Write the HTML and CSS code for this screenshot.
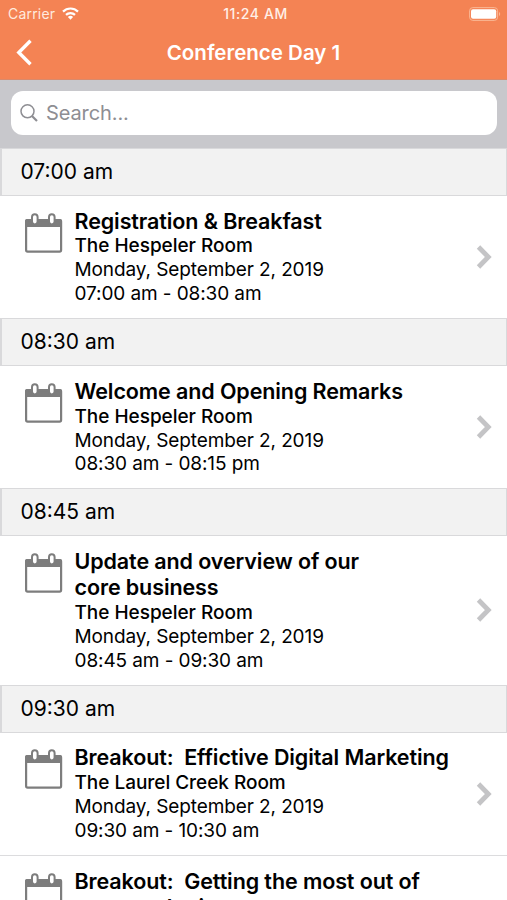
FILE: index.html
```html
<!DOCTYPE html>
<html lang="en">
<head>
<meta charset="utf-8">
<title>Conference Day 1</title>
<link rel="stylesheet" href="styles.css">
</head>
<body>
<svg class="defs" aria-hidden="true">
  <symbol id="calendar" viewBox="0 0 38 40">
    <path d="M2 6h33a2 2 0 0 1 2 2v6H0V8a2 2 0 0 1 2-2z" fill="#7d7d7d"/>
    <rect x="1.1" y="7.1" width="35" height="31.5" rx="1.5" fill="none" stroke="#7d7d7d" stroke-width="2.2"/>
    <rect x="7" y="1.2" width="5.6" height="10.2" rx="2.8" fill="#fff" stroke="#7d7d7d" stroke-width="2"/>
    <rect x="24" y="1.2" width="5.6" height="10.2" rx="2.8" fill="#fff" stroke="#7d7d7d" stroke-width="2"/>
  </symbol>
  <symbol id="chevron" viewBox="0 0 16 24">
    <path d="M2.5 2l9.8 10-9.8 10" fill="none" stroke="#c4c4c6" stroke-width="4.8"/>
  </symbol>
</svg>
<main class="screen">
  <header class="top">
    <div class="status">
      <div class="status-left"><span class="carrier">Carrier</span>
        <svg class="wifi" viewBox="0 0 17 13"><g fill="none" stroke="#fff" stroke-width="2.2"><path d="M1 4.6a10.6 10.6 0 0 1 15 0"/><path d="M4 7.9a6.4 6.4 0 0 1 9 0"/></g><path d="M5.9 10a3.7 3.7 0 0 1 5.2 0l-2.6 2.7z" fill="#fff"/></svg>
      </div>
      <span class="clock">11:24 AM</span>
      <svg class="battery" viewBox="0 0 32 14"><rect x=".6" y=".6" width="28" height="12.8" rx="3.2" fill="none" stroke="#fab894" stroke-width="1"/><rect x="2" y="2.2" width="25.2" height="9.6" rx="2" fill="#fff"/><path d="M30 5c1.6.6 1.6 3.4 0 4z" fill="#fab894"/></svg>
    </div>
    <div class="nav">
      <svg class="back" viewBox="0 0 17 27"><path d="M14.5 1.8L2.8 13.5l11.7 11.7" fill="none" stroke="#fff" stroke-width="3.4"/></svg>
      <h1>Conference Day 1</h1>
    </div>
  </header>
  <div class="searchbar">
    <div class="field">
      <svg class="lens" viewBox="0 0 18 18"><circle cx="7.5" cy="7.3" r="6.5" fill="none" stroke="#8e8e93" stroke-width="1.5"/><path d="M12 12l5 5" stroke="#8e8e93" stroke-width="2.2"/></svg>
      <span class="placeholder">Search...</span>
    </div>
  </div>

  <h2 class="slot">07:00 am</h2>
  <article class="row">
    <svg class="cal"><use href="#calendar"/></svg>
    <div class="info"><h3>Registration &amp; Breakfast</h3><p class="room">The Hespeler Room</p><p>Monday, September 2, 2019</p><p>07:00 am - 08:30 am</p></div>
    <svg class="go"><use href="#chevron"/></svg>
  </article>

  <h2 class="slot">08:30 am</h2>
  <article class="row">
    <svg class="cal"><use href="#calendar"/></svg>
    <div class="info"><h3>Welcome and Opening Remarks</h3><p class="room">The Hespeler Room</p><p>Monday, September 2, 2019</p><p>08:30 am - 08:15 pm</p></div>
    <svg class="go"><use href="#chevron"/></svg>
  </article>

  <h2 class="slot">08:45 am</h2>
  <article class="row">
    <svg class="cal"><use href="#calendar"/></svg>
    <div class="info"><h3>Update and overview of our<br>core business</h3><p class="room">The Hespeler Room</p><p>Monday, September 2, 2019</p><p>08:45 am - 09:30 am</p></div>
    <svg class="go"><use href="#chevron"/></svg>
  </article>

  <h2 class="slot">09:30 am</h2>
  <article class="row">
    <svg class="cal"><use href="#calendar"/></svg>
    <div class="info"><h3>Breakout:&nbsp; Effictive Digital Marketing</h3><p class="room">The Laurel Creek Room</p><p>Monday, September 2, 2019</p><p>09:30 am - 10:30 am</p></div>
    <svg class="go"><use href="#chevron"/></svg>
  </article>
  <article class="row next">
    <svg class="cal"><use href="#calendar"/></svg>
    <div class="info"><h3>Breakout:&nbsp; Getting the most out of<br>your marketing</h3></div>
  </article>
</main>
</body>
</html>
```
FILE: styles.css
```css
* { box-sizing: border-box; margin: 0; padding: 0; }
body {
  font-family: Inter, "Liberation Sans", sans-serif;
  background: #fff;
  color: #000;
  overflow: hidden;
}
svg { display: block; flex: none; }
.defs { display: none; }
.screen { width: 507px; height: 900px; overflow: hidden; }

.top { height: 80px; background: #f48354; color: #fff; border-bottom: 1px solid #d98a6c; }
.status {
  height: 27px;
  padding: 0 6px 0 8px;
  display: grid;
  grid-template-columns: 1fr auto 1fr;
  align-items: center;
}
.status-left { display: flex; align-items: center; gap: 7px; }
.carrier { font-size: 14px; letter-spacing: 0.2px; color: #ffeade; }
.wifi { width: 17px; height: 13px; }
.clock { padding-left: 2px; font-size: 14px; font-weight: 500; letter-spacing: 0.6px; color: #fff0e8; }
.battery { width: 32px; height: 14px; justify-self: end; }
.nav {
  height: 51px;
  padding: 0 16px;
  display: grid;
  grid-template-columns: 17px 1fr 17px;
  align-items: center;
}
.back { width: 17px; height: 27px; }
h1 { font-size: 20.5px; line-height: 26px; font-weight: 600; text-align: center; }

.searchbar { height: 67.8px; padding: 11px 10px 12.8px 11px; background: #c8c8cc; }
.field {
  height: 44px;
  padding: 0 9px;
  display: flex;
  align-items: center;
  gap: 8px;
  background: #fff;
  border-radius: 12px;
}
.lens { width: 18px; height: 18px; }
.placeholder { font-size: 20px; letter-spacing: -0.1px; color: #8e8e93; }

.slot {
  height: 48px;
  padding-left: 18.5px;
  border: 1px solid #d9d9db;
  border-left-width: 2px;
  background: #f2f2f2;
  font-size: 21px;
  font-weight: 400;
  line-height: 46.8px;
}
.row {
  display: flex;
  align-items: center;
  padding: 11.8px 15px 12.2px 25px;
}
.cal { width: 38px; height: 40px; align-self: flex-start; margin-top: 5px; }
.info { flex: 1; margin-left: 11.5px; white-space: nowrap; }
.info h3 {
  margin-bottom: 0.8px;
  font-size: 21.5px;
  line-height: 26.1px;
  letter-spacing: -0.1px;
  font-weight: 600;
}
.info p { font-size: 19px; line-height: 23.8px; letter-spacing: -0.1px; }
.info .room { font-weight: 500; letter-spacing: -0.03px; }
.go { width: 16px; height: 24px; }
.next { border-top: 1px solid #dcdcde; }
```
